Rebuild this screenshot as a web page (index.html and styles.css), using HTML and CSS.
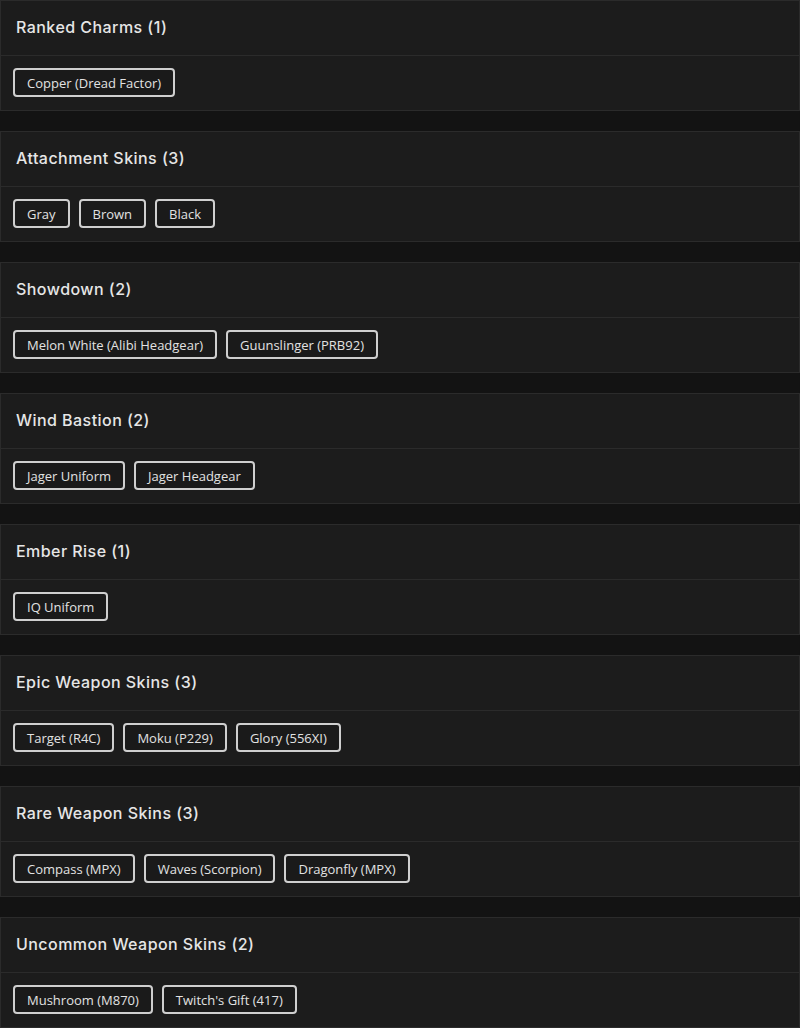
FILE: index.html
```html
<!DOCTYPE html>
<html>
<head>
<meta charset="utf-8">
<link rel="stylesheet" href="styles.css">
</head>
<body>
<div class="list">
  <section class="card">
    <div class="card-head">Ranked Charms (1)</div>
    <div class="card-body"><span class="tag">Copper (Dread Factor)</span></div>
  </section>
  <section class="card">
    <div class="card-head">Attachment Skins (3)</div>
    <div class="card-body"><span class="tag">Gray</span><span class="tag">Brown</span><span class="tag">Black</span></div>
  </section>
  <section class="card">
    <div class="card-head">Showdown (2)</div>
    <div class="card-body"><span class="tag">Melon White (Alibi Headgear)</span><span class="tag">Guunslinger (PRB92)</span></div>
  </section>
  <section class="card">
    <div class="card-head">Wind Bastion (2)</div>
    <div class="card-body"><span class="tag">Jager Uniform</span><span class="tag">Jager Headgear</span></div>
  </section>
  <section class="card">
    <div class="card-head">Ember Rise (1)</div>
    <div class="card-body"><span class="tag">IQ Uniform</span></div>
  </section>
  <section class="card">
    <div class="card-head">Epic Weapon Skins (3)</div>
    <div class="card-body"><span class="tag">Target (R4C)</span><span class="tag">Moku (P229)</span><span class="tag">Glory (556XI)</span></div>
  </section>
  <section class="card">
    <div class="card-head">Rare Weapon Skins (3)</div>
    <div class="card-body"><span class="tag">Compass (MPX)</span><span class="tag">Waves (Scorpion)</span><span class="tag">Dragonfly (MPX)</span></div>
  </section>
  <section class="card">
    <div class="card-head">Uncommon Weapon Skins (2)</div>
    <div class="card-body"><span class="tag">Mushroom (M870)</span><span class="tag">Twitch's Gift (417)</span></div>
  </section>
</div>
</body>
</html>
```
FILE: styles.css
```css
html, body {
  margin: 0;
  padding: 0;
  background: #131313;
}
body {
  font-family: "Open Sans", "DejaVu Sans", sans-serif;
  color: #e6e6e6;
}
.list {
  display: flex;
  flex-direction: column;
  gap: 20px;
}
.card {
  background: #1c1c1c;
  border: 1px solid #2b2b2b;
}
.card-head {
  height: 55px;
  box-sizing: border-box;
  display: flex;
  align-items: center;
  padding: 0 15px 2px;
  font-family: "Inter", "Open Sans", sans-serif;
  font-size: 16px;
  font-weight: 500;
  letter-spacing: 0.45px;
  border-bottom: 1px solid #2b2b2b;
  color: #e6e6e6;
}
.card-body {
  display: flex;
  flex-wrap: wrap;
  gap: 9px;
  padding: 12px 12px 13px;
}
.tag {
  display: inline-flex;
  align-items: center;
  height: 29px;
  box-sizing: border-box;
  padding: 0 12px;
  border: 2px solid #cfcfcf;
  border-radius: 4px;
  background: #1a1a1a;
  font-size: 13px;
  color: #e2e2e2;
}
```
